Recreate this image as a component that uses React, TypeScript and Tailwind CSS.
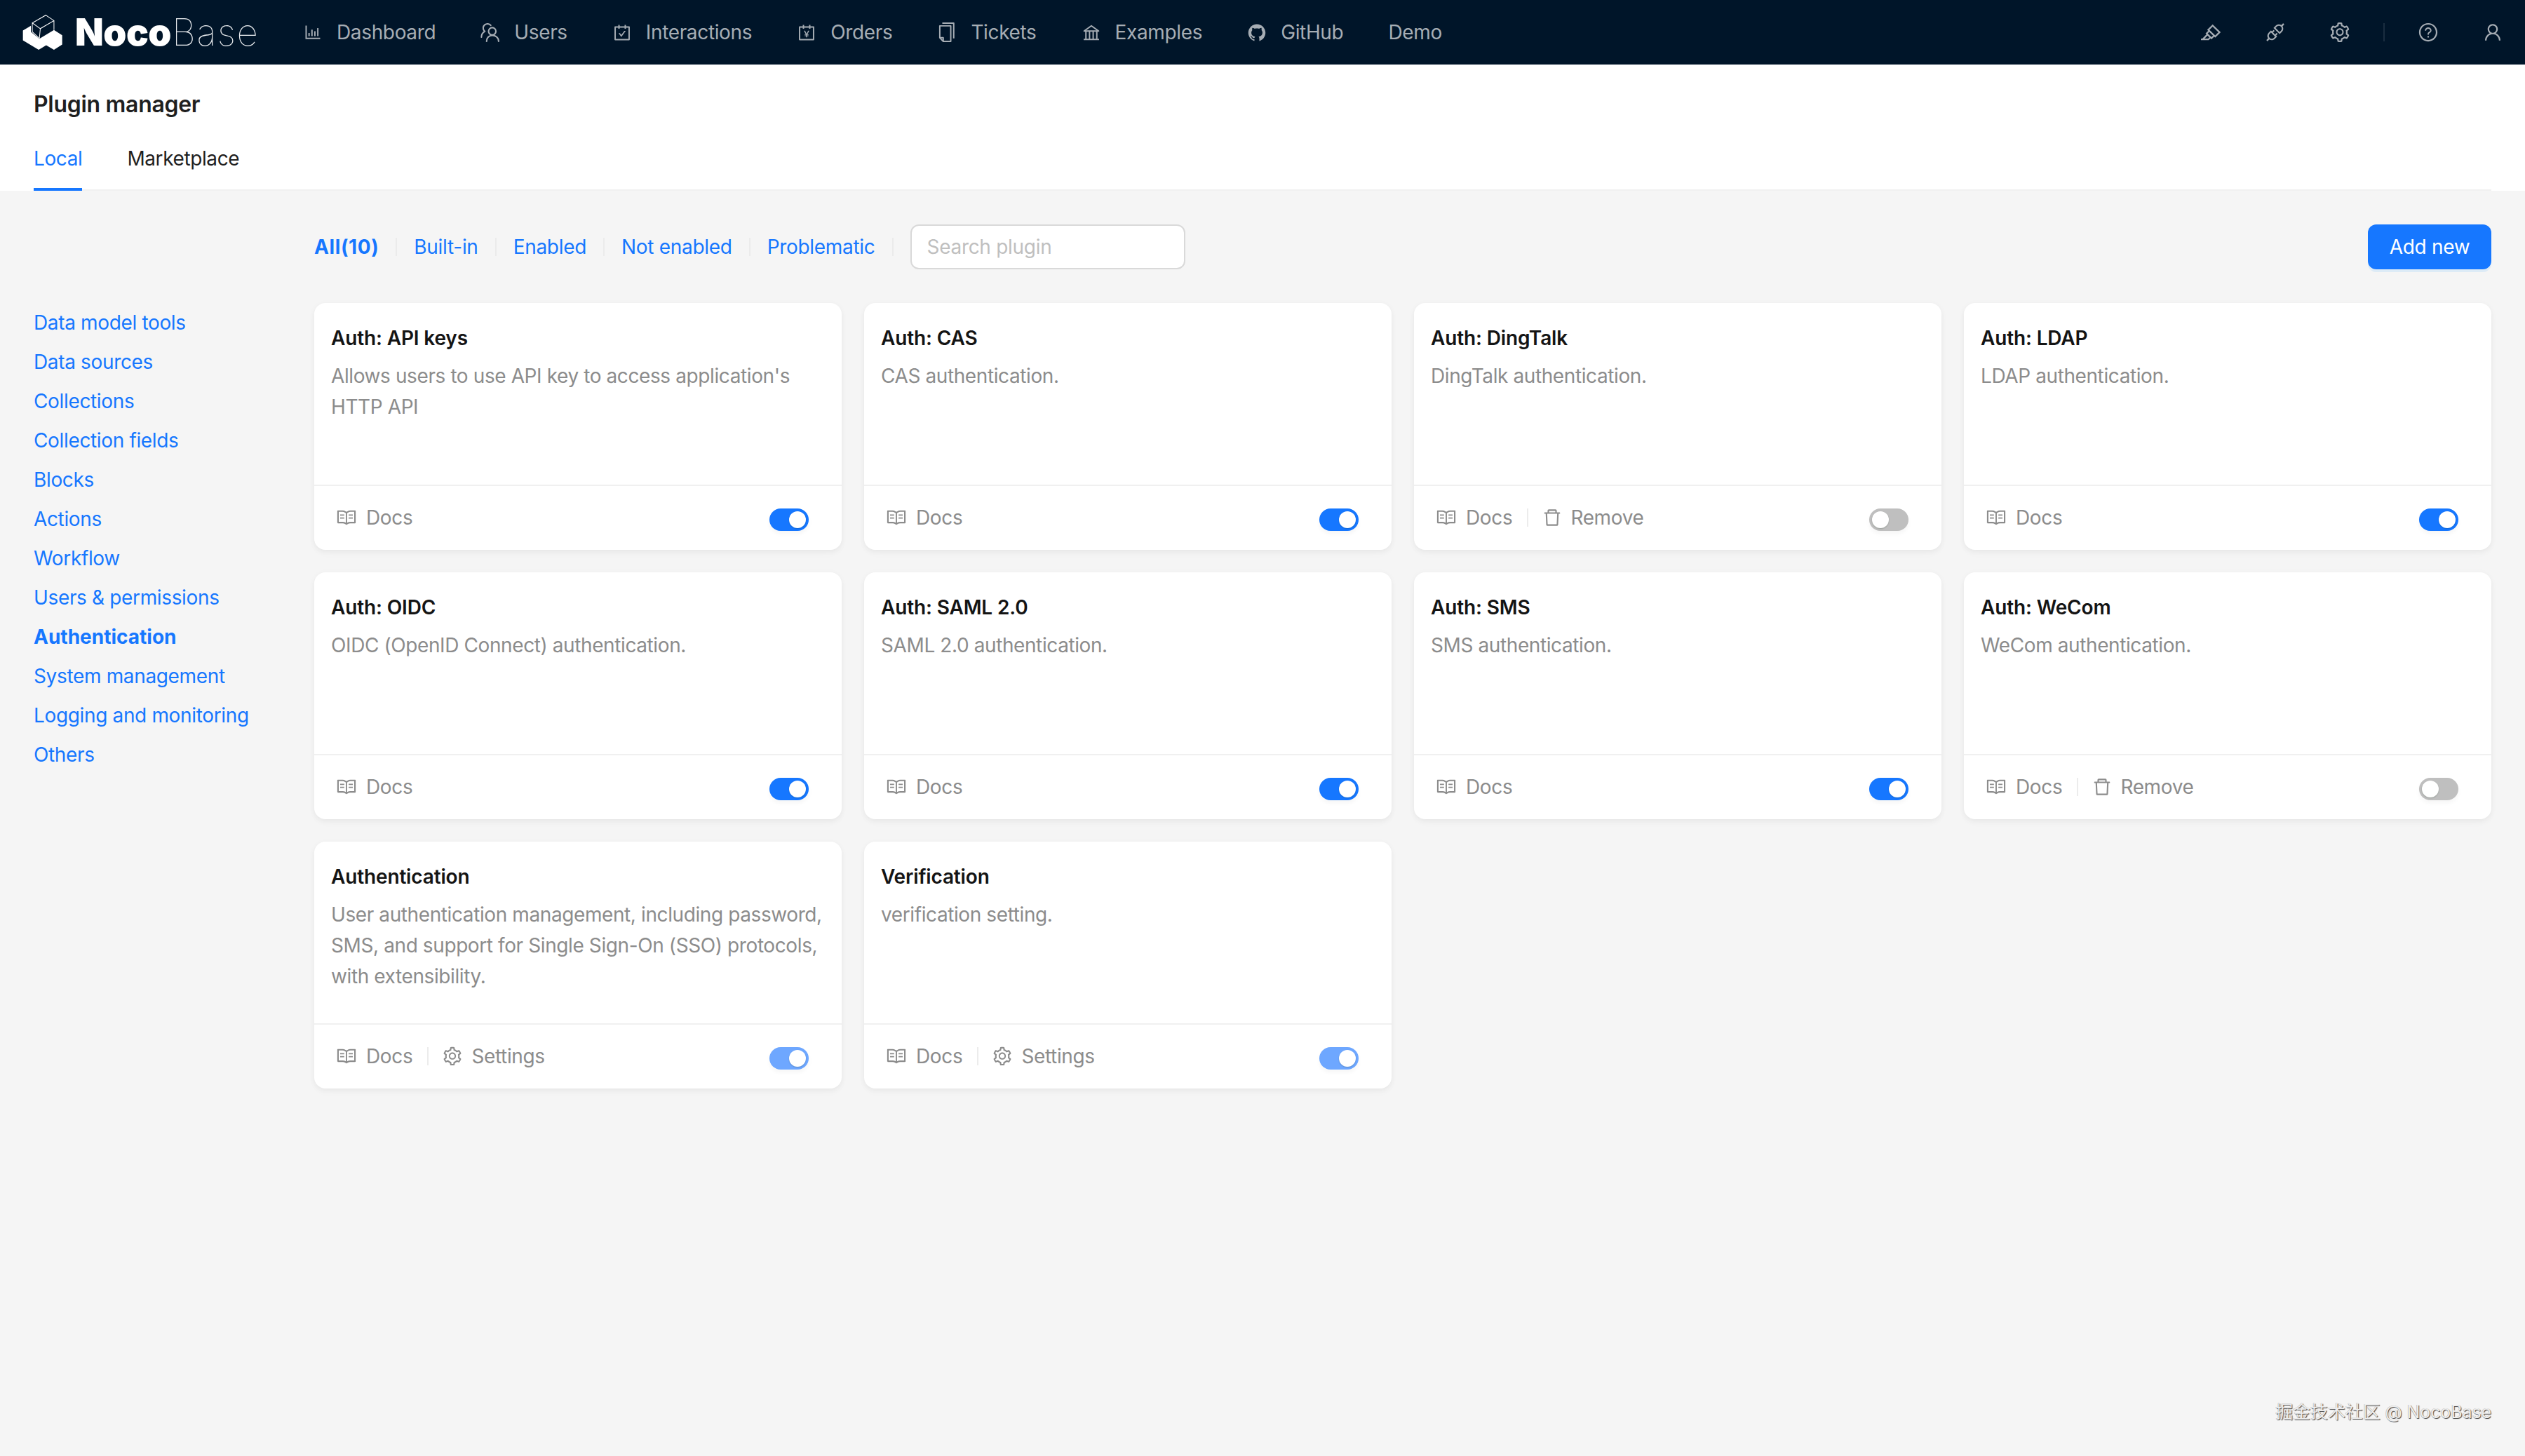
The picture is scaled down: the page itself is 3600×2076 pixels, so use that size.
import React from "react";
import {
  AiOutlineBarChart,
  AiOutlineCarryOut,
  AiOutlineAccountBook,
  AiOutlineBank,
  AiFillGithub,
  AiOutlineHighlight,
  AiOutlineApi,
  AiOutlineSetting,
  AiOutlineQuestionCircle,
  AiOutlineUser,
  AiOutlineRead,
  AiOutlineDelete,
} from "react-icons/ai";

function UsersIcon() {
  return (
    <svg viewBox="48 38 80 80" className="w-[28px] h-[28px]" fill="none" stroke="currentColor" strokeWidth="6" strokeLinecap="round">
      <path d="M63 72 A16 16 0 1 1 90 50" />
      <path d="M52 98 C52 86 57 79 66 74" />
      <circle cx="96" cy="74" r="15" />
      <path d="M73 115 C73 100 83 91 96 91 C110 91 122 100 122 115" />
    </svg>
  );
}

function TicketsIcon() {
  return (
    <svg viewBox="40 32 76 92" className="w-[26px] h-[30px]" fill="none" stroke="currentColor" strokeWidth="6" strokeLinejoin="round">
      <path d="M58 38 H108 V105" />
      <path d="M47 50 H95 V118 H62 L47 102 Z" />
      <path d="M47 102 H62 V118" />
    </svg>
  );
}

function Logo() {
  return (
    <div className="flex items-center gap-[18px] ml-[32px] w-[400px]">
      <svg viewBox="36 30 170 155" className="w-[57px] h-[52px] shrink-0">
        <path d="M38 100 L72 80 V106 L108 135 L170 98 L205 120 V160 L170 182 L137 163 L105 182 L38 142 Z" fill="#fff" />
        <path d="M78 68 L135 35 L170 58 L112 92 Z M78 68 V106 L108 133 L112 92 M170 58 V98" fill="none" stroke="#fff" strokeWidth="3" />
      </svg>
      <div className="flex items-center text-[53px] leading-none text-white">
        <span className="font-black tracking-[-0.5px]">Noco</span>
        <span className="font-thin ml-[1px] tracking-[1.5px] text-[#e8ebee]">Base</span>
      </div>
    </div>
  );
}

const navItems: { label: string; icon?: React.ReactNode }[] = [
  { label: "Dashboard", icon: <AiOutlineBarChart size={30} /> },
  { label: "Users", icon: <UsersIcon /> },
  { label: "Interactions", icon: <AiOutlineCarryOut size={31} /> },
  { label: "Orders", icon: <AiOutlineAccountBook size={31} /> },
  { label: "Tickets", icon: <TicketsIcon /> },
  { label: "Examples", icon: <AiOutlineBank size={31} /> },
  { label: "GitHub", icon: <AiFillGithub size={31} /> },
  { label: "Demo" },
];

function Header() {
  return (
    <header className="h-[92px] bg-[#001529] flex items-center text-[#a6adb4] text-[28px] tracking-[-0.35px] shrink-0">
      <Logo />
      <nav className="flex items-center gap-[64px]">
        {navItems.map((n) => (
          <div key={n.label} className="flex items-center gap-[20px]">
            {n.icon && <span className="w-[28px] h-[30px] flex items-center justify-center">{n.icon}</span>}
            <span>{n.label}</span>
          </div>
        ))}
      </nav>
      <div className="ml-auto flex items-center">
        <span className="w-[92px] flex justify-center"><AiOutlineHighlight size={32} /></span>
        <span className="w-[92px] flex justify-center"><AiOutlineApi size={32} /></span>
        <span className="w-[92px] flex justify-center"><AiOutlineSetting size={32} /></span>
        <span className="w-[34px] flex justify-center"><span className="w-[2px] h-[26px] bg-[#1a2d40]" /></span>
        <span className="w-[92px] flex justify-center"><AiOutlineQuestionCircle size={30} /></span>
        <span className="w-[92px] flex justify-center"><AiOutlineUser size={30} /></span>
      </div>
    </header>
  );
}

function PageHead() {
  return (
    <div className="bg-white shrink-0 h-[180px]">
      <h1 className="pl-[48px] pt-[33px] h-[80px] text-[32px] leading-[48px] font-semibold tracking-[-0.3px] text-[#1f1f1f]">Plugin manager</h1>
      <div className="mx-[48px] h-[100px] pt-[32px] border-b-2 border-[#f0f0f0] flex gap-[64px] text-[28px] tracking-[-0.4px] leading-[44px]">
        <div className="relative text-[#1677ff]">
          Local
          <span className="absolute left-0 right-0 top-[64px] h-[4px] bg-[#1677ff]" />
        </div>
        <div className="text-[#1f1f1f]">Marketplace</div>
      </div>
    </div>
  );
}

const sideItems = [
  "Data model tools",
  "Data sources",
  "Collections",
  "Collection fields",
  "Blocks",
  "Actions",
  "Workflow",
  "Users & permissions",
  "Authentication",
  "System management",
  "Logging and monitoring",
  "Others",
];

function Sidebar() {
  return (
    <aside className="w-[448px] shrink-0 pl-[48px] pt-[160px] text-[28px] tracking-[-0.35px] text-[#1677ff]">
      {sideItems.map((s) => (
        <div key={s} className={s === "Authentication" ? "h-[56px] leading-[56px] font-bold tracking-normal" : "h-[56px] leading-[56px]"}>
          {s}
        </div>
      ))}
    </aside>
  );
}

const filters = ["All(10)", "Built-in", "Enabled", "Not enabled", "Problematic"];

function Toolbar() {
  return (
    <div className="flex items-center h-[64px] mb-[48px] text-[28px] text-[#1677ff]">
      <div className="flex items-center gap-[24px]">
        {filters.map((f, i) => (
          <React.Fragment key={f}>
            <span className={i === 0 ? "font-bold tracking-[0.6px]" : "tracking-[-0.3px]"}>{f}</span>
            <span className="w-[2px] h-[26px] bg-[#ebebeb]" />
          </React.Fragment>
        ))}
      </div>
      <input
        placeholder="Search plugin"
        className="ml-[24px] w-[392px] h-[64px] rounded-[12px] border-2 border-[#d9d9d9] bg-white pl-[22px] text-[28px] tracking-[-0.3px] outline-none placeholder:text-[#bfbfbf]"
      />
      <button className="ml-auto w-[176px] h-[64px] rounded-[12px] bg-[#1677ff] text-white text-[28px] tracking-[-0.3px] shadow-[0_4px_0_rgba(5,145,255,0.1)]">
        Add new
      </button>
    </div>
  );
}

type CardData = { title: string; desc: string; on: boolean; extra?: "remove" | "settings"; fixed?: boolean };

const cards: CardData[] = [
  { title: "Auth: API keys", desc: "Allows users to use API key to access application's HTTP API", on: true },
  { title: "Auth: CAS", desc: "CAS authentication.", on: true },
  { title: "Auth: DingTalk", desc: "DingTalk authentication.", on: false, extra: "remove" },
  { title: "Auth: LDAP", desc: "LDAP authentication.", on: true },
  { title: "Auth: OIDC", desc: "OIDC (OpenID Connect) authentication.", on: true },
  { title: "Auth: SAML 2.0", desc: "SAML 2.0 authentication.", on: true },
  { title: "Auth: SMS", desc: "SMS authentication.", on: true },
  { title: "Auth: WeCom", desc: "WeCom authentication.", on: false, extra: "remove" },
  {
    title: "Authentication",
    desc: "User authentication management, including password, SMS, and support for Single Sign-On (SSO) protocols, with extensibility.",
    on: true,
    extra: "settings",
    fixed: true,
  },
  { title: "Verification", desc: "verification setting.", on: true, extra: "settings", fixed: true },
];

function Switch({ on, fixed }: { on: boolean; fixed?: boolean }) {
  const track = !on ? "bg-[#bfbfbf] justify-start" : fixed ? "bg-[#6ea7ff] justify-end" : "bg-[#1677ff] justify-end";
  return (
    <span className={`w-[56px] h-[32px] rounded-full flex items-center px-[4px] mt-[5px] shadow-[0_4px_6px_rgba(0,0,0,0.04)] ${track}`}>
      <span className="w-[24px] h-[24px] rounded-full bg-white shadow-[0_1px_2px_rgba(0,35,11,0.2)]" />
    </span>
  );
}

function Card({ c }: { c: CardData }) {
  return (
    <div className="h-[352px] bg-white rounded-[16px] shadow-[0_2px_8px_rgba(0,0,0,0.05),0_6px_12px_rgba(0,0,0,0.02)] flex flex-col">
      <div className="h-[259px] px-[24px] pt-[28px] shrink-0">
        <div className="text-[28px] leading-[44px] font-semibold tracking-[-0.15px] text-[#141414]">{c.title}</div>
        <div className="mt-[10px] text-[28px] leading-[44px] tracking-[-0.4px] text-[#8c8c8c]">{c.desc}</div>
      </div>
      <div className="flex-1 border-t-2 border-[#f0f0f0] flex items-center justify-between pl-[31px] pr-[47px] text-[28px] tracking-[-0.35px] text-[#8c8c8c]">
        <div className="flex items-center -mt-[1px]">
          <AiOutlineRead size={30} />
          <span className="ml-[13px]">Docs</span>
          {c.extra && <span className="w-[2px] h-[26px] bg-[#ececec] ml-[21px] mr-[20px]" />}
          {c.extra === "remove" && (
            <>
              <AiOutlineDelete size={30} className="-ml-[1px]" />
              <span className="ml-[11px]">Remove</span>
            </>
          )}
          {c.extra === "settings" && (
            <>
              <AiOutlineSetting size={30} className="-ml-[1px]" />
              <span className="ml-[12px]">Settings</span>
            </>
          )}
        </div>
        <Switch on={c.on} fixed={c.fixed} />
      </div>
    </div>
  );
}

export default function App() {
  return (
    <div className="relative w-full h-screen overflow-hidden bg-[#f5f5f5] flex flex-col font-['Inter',sans-serif]">
      <Header />
      <PageHead />
      <main className="flex flex-1">
        <Sidebar />
        <section className="flex-1 pt-[48px] pr-[48px]">
          <Toolbar />
          <div className="grid grid-cols-4 gap-[32px]">
            {cards.map((c) => (
              <Card key={c.title} c={c} />
            ))}
          </div>
        </section>
      </main>
      <div className="absolute right-[48px] top-[1996px] text-[25px] leading-[34px] tracking-[-0.1px] text-[#eeeeee] [text-shadow:1px_1px_1px_#444,-0.5px_-0.5px_0_#aaa] font-['Inter','Noto_Sans_CJK_SC',sans-serif]">
        掘金技术社区 @ NocoBase
      </div>
    </div>
  );
}
